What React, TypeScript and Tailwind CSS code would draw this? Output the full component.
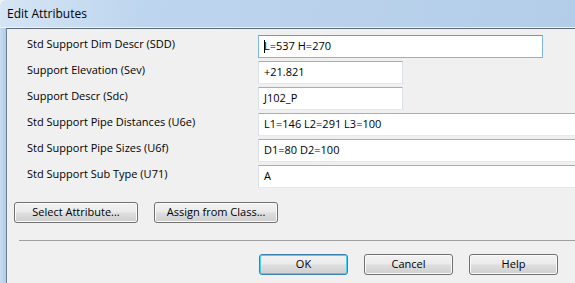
import React from 'react';

const rows = [
  { label: 'Std Support Dim Descr (SDD)', value: 'L=537 H=270', width: 'w-[285px]', focused: true },
  { label: 'Support Elevation (Sev)', value: '+21.821', width: 'w-[145px]' },
  { label: 'Support Descr (Sdc)', value: 'J102_P', width: 'w-[145px]' },
  { label: 'Std Support Pipe Distances (U6e)', value: 'L1=146 L2=291 L3=100', width: 'w-[340px]' },
  { label: 'Std Support Pipe Sizes (U6f)', value: 'D1=80 D2=100', width: 'w-[340px]' },
  { label: 'Std Support Sub Type (U71)', value: 'A', width: 'w-[340px]' },
];

const btnBase =
  'h-[21px] shrink-0 rounded-[3px] border flex items-center justify-center bg-[linear-gradient(#f2f2f2_0%,#ebebeb_45%,#dddddd_55%,#cfcfcf_100%)]';

const Button: React.FC<{ label: string; width: string; isDefault?: boolean }> = ({ label, width, isDefault }) => (
  <div
    className={`${btnBase} ${width} ${
      isDefault
        ? 'border-[#3c7fb1] shadow-[inset_0_0_0_1px_#48cff5]'
        : 'border-[#707070] shadow-[inset_0_0_0_1px_#fbfbfb]'
    }`}
  >
    {label}
  </div>
);

export default function App() {
  return (
    <div className="w-[575px] h-[283px] overflow-hidden flex flex-col bg-[#f0f0f0] text-black text-[11px] font-['Open_Sans',sans-serif]">
      {/* title bar */}
      <div className="h-[27px] shrink-0 flex items-center pl-[7px] text-[12px] rounded-tl-[6px] bg-[linear-gradient(100deg,#d6e5f4_0%,#bdd5ee_25%,#b9d1eb_60%,#b3cde9_100%)]">
        Edit Attributes
      </div>
      <div className="h-px shrink-0 bg-[#eef4fa]" />

      <div className="flex flex-1 min-h-0">
        {/* window frame */}
        <div className="w-[7px] shrink-0 border-r border-[#6b7f95] bg-[linear-gradient(90deg,#c9dcf0,#b0cbe8)]" />

        <div className="flex-1 min-w-0 border-t border-[#5a6877] bg-[#f0f0f0] flex flex-col">
          <div className="pt-[6px] flex flex-col gap-[3px]">
            {rows.map((r) => (
              <div key={r.label} className="flex items-start">
                <div className="w-[251px] shrink-0 pl-[20px] leading-[16px] pt-px">{r.label}</div>
                <div
                  className={`${r.width} h-[23px] shrink-0 bg-white border flex items-center pl-[5px] whitespace-nowrap ${
                    r.focused
                      ? 'border-[#7eb4ea] border-t-[#569de5]'
                      : 'border-[#e3e9ef] border-t-[#abadb3] border-l-[#dbdfe6] border-r-[#dbdfe6]'
                  }`}
                >
                  {r.focused && <span className="w-px h-[13px] bg-black -mr-px" />}
                  {r.value}
                </div>
              </div>
            ))}
          </div>

          <div className="flex gap-[16px] pl-[7px] mt-[14px]">
            <Button label="Select Attribute..." width="w-[124px]" />
            <Button label="Assign from Class..." width="w-[124px]" />
          </div>

          <div className="h-px bg-[#a0a0a0] ml-[12px] mt-[17px]" />

          <div className="flex gap-[16px] pl-[252px] mt-[13px]">
            <Button label="OK" width="w-[89px]" isDefault />
            <Button label="Cancel" width="w-[89px]" />
            <Button label="Help" width="w-[89px]" />
          </div>
        </div>
      </div>
    </div>
  );
}
